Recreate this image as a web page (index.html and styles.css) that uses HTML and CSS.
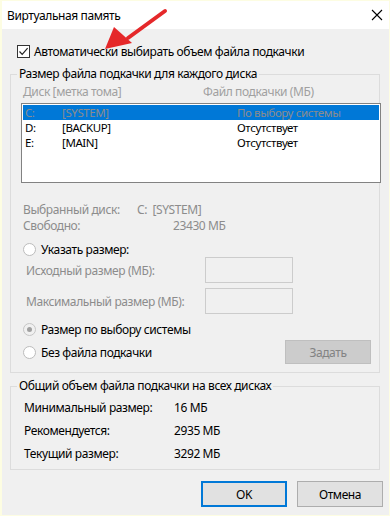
FILE: index.html
```html
<!doctype html>
<html lang="ru">
<head>
    <meta charset="utf-8">
    <title>Виртуальная память</title>
    <link rel="stylesheet" href="styles.css">
</head>
<body>
    <div class="window">
        <div class="titlebar">
            <span class="title">Виртуальная память</span>
            <svg class="close" width="12" height="12" viewBox="0 0 12 12">
                <path d="M1 1 L11 11 M11 1 L1 11" stroke="#000" stroke-width="1.1" fill="none"/>
            </svg>
        </div>
        <div class="content">
            <label class="check-row">
                <span class="checkbox">
                    <svg width="11" height="11" viewBox="0 0 11 11">
                        <path d="M1.5 5.5 L4.2 8.3 L9.6 2.2" stroke="#222" stroke-width="1.2" fill="none"/>
                    </svg>
                </span>
                Автоматически выбирать объем файла подкачки
            </label>

            <fieldset class="group group-disks">
                <legend>Размер файла подкачки для каждого диска</legend>
                <div class="list-head">
                    <span class="col-disk">Диск [метка тома]</span>
                    <span>Файл подкачки (МБ)</span>
                </div>
                <div class="listbox">
                    <div class="list-row selected">
                        <span class="col-letter">C:</span>
                        <span class="col-label">[SYSTEM]</span>
                        <span>По выбору системы</span>
                    </div>
                    <div class="list-row">
                        <span class="col-letter">D:</span>
                        <span class="col-label">[BACKUP]</span>
                        <span>Отсутствует</span>
                    </div>
                    <div class="list-row">
                        <span class="col-letter">E:</span>
                        <span class="col-label">[MAIN]</span>
                        <span>Отсутствует</span>
                    </div>
                </div>

                <div class="info-row first">
                    <span class="info-label">Выбранный диск:</span>
                    <span>C:&nbsp; [SYSTEM]</span>
                </div>
                <div class="info-row">
                    <span class="info-label">Свободно:</span>
                    <span class="free">23430 МБ</span>
                </div>

                <div class="radio-row custom">
                    <span class="radio"></span>
                    Указать размер:
                </div>
                <div class="size-row">
                    <span class="size-label">Исходный размер (МБ):</span>
                    <span class="textbox"></span>
                </div>
                <div class="size-row second">
                    <span class="size-label">Максимальный размер (МБ):</span>
                    <span class="textbox"></span>
                </div>
                <div class="radio-row system">
                    <span class="radio checked"></span>
                    Размер по выбору системы
                </div>
                <div class="radio-row none">
                    <span class="radio"></span>
                    Без файла подкачки
                    <button class="btn btn-set" disabled>Задать</button>
                </div>
            </fieldset>

            <fieldset class="group group-total">
                <legend>Общий объем файла подкачки на всех дисках</legend>
                <div class="total-row">
                    <span class="total-label">Минимальный размер:</span>
                    <span>16 МБ</span>
                </div>
                <div class="total-row">
                    <span class="total-label">Рекомендуется:</span>
                    <span>2935 МБ</span>
                </div>
                <div class="total-row">
                    <span class="total-label">Текущий размер:</span>
                    <span>3292 МБ</span>
                </div>
            </fieldset>

            <div class="buttons">
                <button class="btn btn-ok">OK</button>
                <button class="btn">Отмена</button>
            </div>
        </div>

        <!-- red pointer drawn over the dialog -->
        <svg class="arrow" width="80" height="50" viewBox="0 0 80 50">
            <path d="M67 4 L30 31" stroke="#e5282a" stroke-width="4" stroke-linecap="round" fill="none"/>
            <path d="M7 42 L16 20 L34 36 Z" fill="#e5282a"/>
        </svg>
    </div>
</body>
</html>
```

FILE: styles.css
```css
body {
    margin: 0;
    font-family: "Noto Sans", "Liberation Sans", sans-serif;
    font-size: 12px;
    letter-spacing: -0.4px;
    color: #000;
}
.window {
    position: relative;
    width: 390px;
    height: 516px;
    box-sizing: border-box;
    border: 1px solid #fdfde2;
    border-left-width: 2px;
    background-color: #f0f0f0;
    display: flex;
    flex-direction: column;
}
.titlebar {
    height: 28px;
    background-color: #fff;
    display: flex;
    align-items: center;
    justify-content: space-between;
    padding: 0 6px 0 5px;
}
.title {
    font-size: 12px;
}
.content {
    display: flex;
    flex-direction: column;
    padding: 0 6px 0 8px;
}
.check-row {
    display: flex;
    align-items: center;
    height: 16px;
    margin-top: 14px;
    margin-left: 7px;
}
.checkbox {
    width: 11px;
    height: 11px;
    border: 1px solid #333;
    background-color: #fff;
    margin-right: 4px;
    display: flex;
}
.group {
    margin: 0;
    border: 1px solid #dcdcdc;
    padding: 0 0 0 12px;
    width: 370px;
    box-sizing: border-box;
    min-width: 0;
}
.group legend {
    padding: 0 2px;
    margin-left: -6px;
    line-height: 16px;
}
.group-disks {
    margin-top: 7px;
    padding-top: 2px;
    padding-bottom: 8px;
}
.list-head {
    display: flex;
    height: 16px;
    line-height: 16px;
    color: #a0a0a0;
}
.col-disk {
    width: 180px;
}
.listbox {
    margin-top: 3px;
    margin-left: -2px;
    width: 360px;
    height: 80px;
    box-sizing: border-box;
    border: 1px solid #828282;
    background-color: #fff;
    padding: 1px;
}
.list-row {
    display: flex;
    height: 15px;
    line-height: 15px;
    font-size: 11.5px;
    padding-left: 2px;
    overflow: hidden;
}
.list-row.selected {
    background-color: #0078d7;
    color: #8c8c8c;
}
.col-letter {
    width: 37px;
}
.col-label {
    width: 175px;
}
.info-row {
    display: flex;
    height: 16px;
    line-height: 16px;
    color: #8c8c8c;
}
.info-row.first {
    margin-top: 19px;
}
.info-label {
    width: 114px;
}
.free {
    margin-left: 36px;
}
.radio-row {
    display: flex;
    align-items: center;
    height: 16px;
}
.radio-row.custom {
    margin-top: 7px;
}
.radio-row.system {
    margin-top: 7px;
}
.radio-row.none {
    height: 24px;
    margin-top: 3px;
}
.radio {
    width: 11px;
    height: 11px;
    border: 1px solid #bcbcbc;
    border-radius: 50%;
    background-color: #fff;
    margin-right: 5px;
    position: relative;
}
.radio.checked {
    background-color: #f0f0f0;
    border-color: #c6c6c6;
}
.radio.checked::after {
    content: "";
    position: absolute;
    left: 3px;
    top: 3px;
    width: 5px;
    height: 5px;
    border-radius: 50%;
    background-color: #a0a0a0;
}
.size-row {
    display: flex;
    align-items: center;
    height: 26px;
    padding-left: 3px;
    color: #8c8c8c;
}
.size-row.second {
    margin-top: 5px;
}
.size-label {
    width: 179px;
}
.textbox {
    width: 88px;
    height: 26px;
    box-sizing: border-box;
    border: 1px solid #cccccc;
    background-color: #f0f0f0;
}
.btn {
    font-family: inherit;
    font-size: 12px;
    letter-spacing: inherit;
    width: 86px;
    height: 26px;
    box-sizing: border-box;
    border: 1px solid #adadad;
    background-color: #e1e1e1;
    color: #000;
    padding: 0;
}
.btn-set {
    margin-left: auto;
    margin-right: 8px;
    height: 24px;
    border-color: #bfbfbf;
    background-color: #cccccc;
    color: #838383;
}
.group-total {
    margin-top: 5px;
    padding-top: 2px;
    padding-bottom: 4px;
}
.total-row {
    display: flex;
    height: 23px;
    line-height: 23px;
}
.total-label {
    width: 150px;
    padding-left: 1px;
}
.buttons {
    display: flex;
    justify-content: flex-end;
    gap: 10px;
    margin-top: 11px;
}
.btn-ok {
    border: 2px solid #0078d7;
}
.arrow {
    position: absolute;
    left: 96px;
    top: 6px;
}
```
